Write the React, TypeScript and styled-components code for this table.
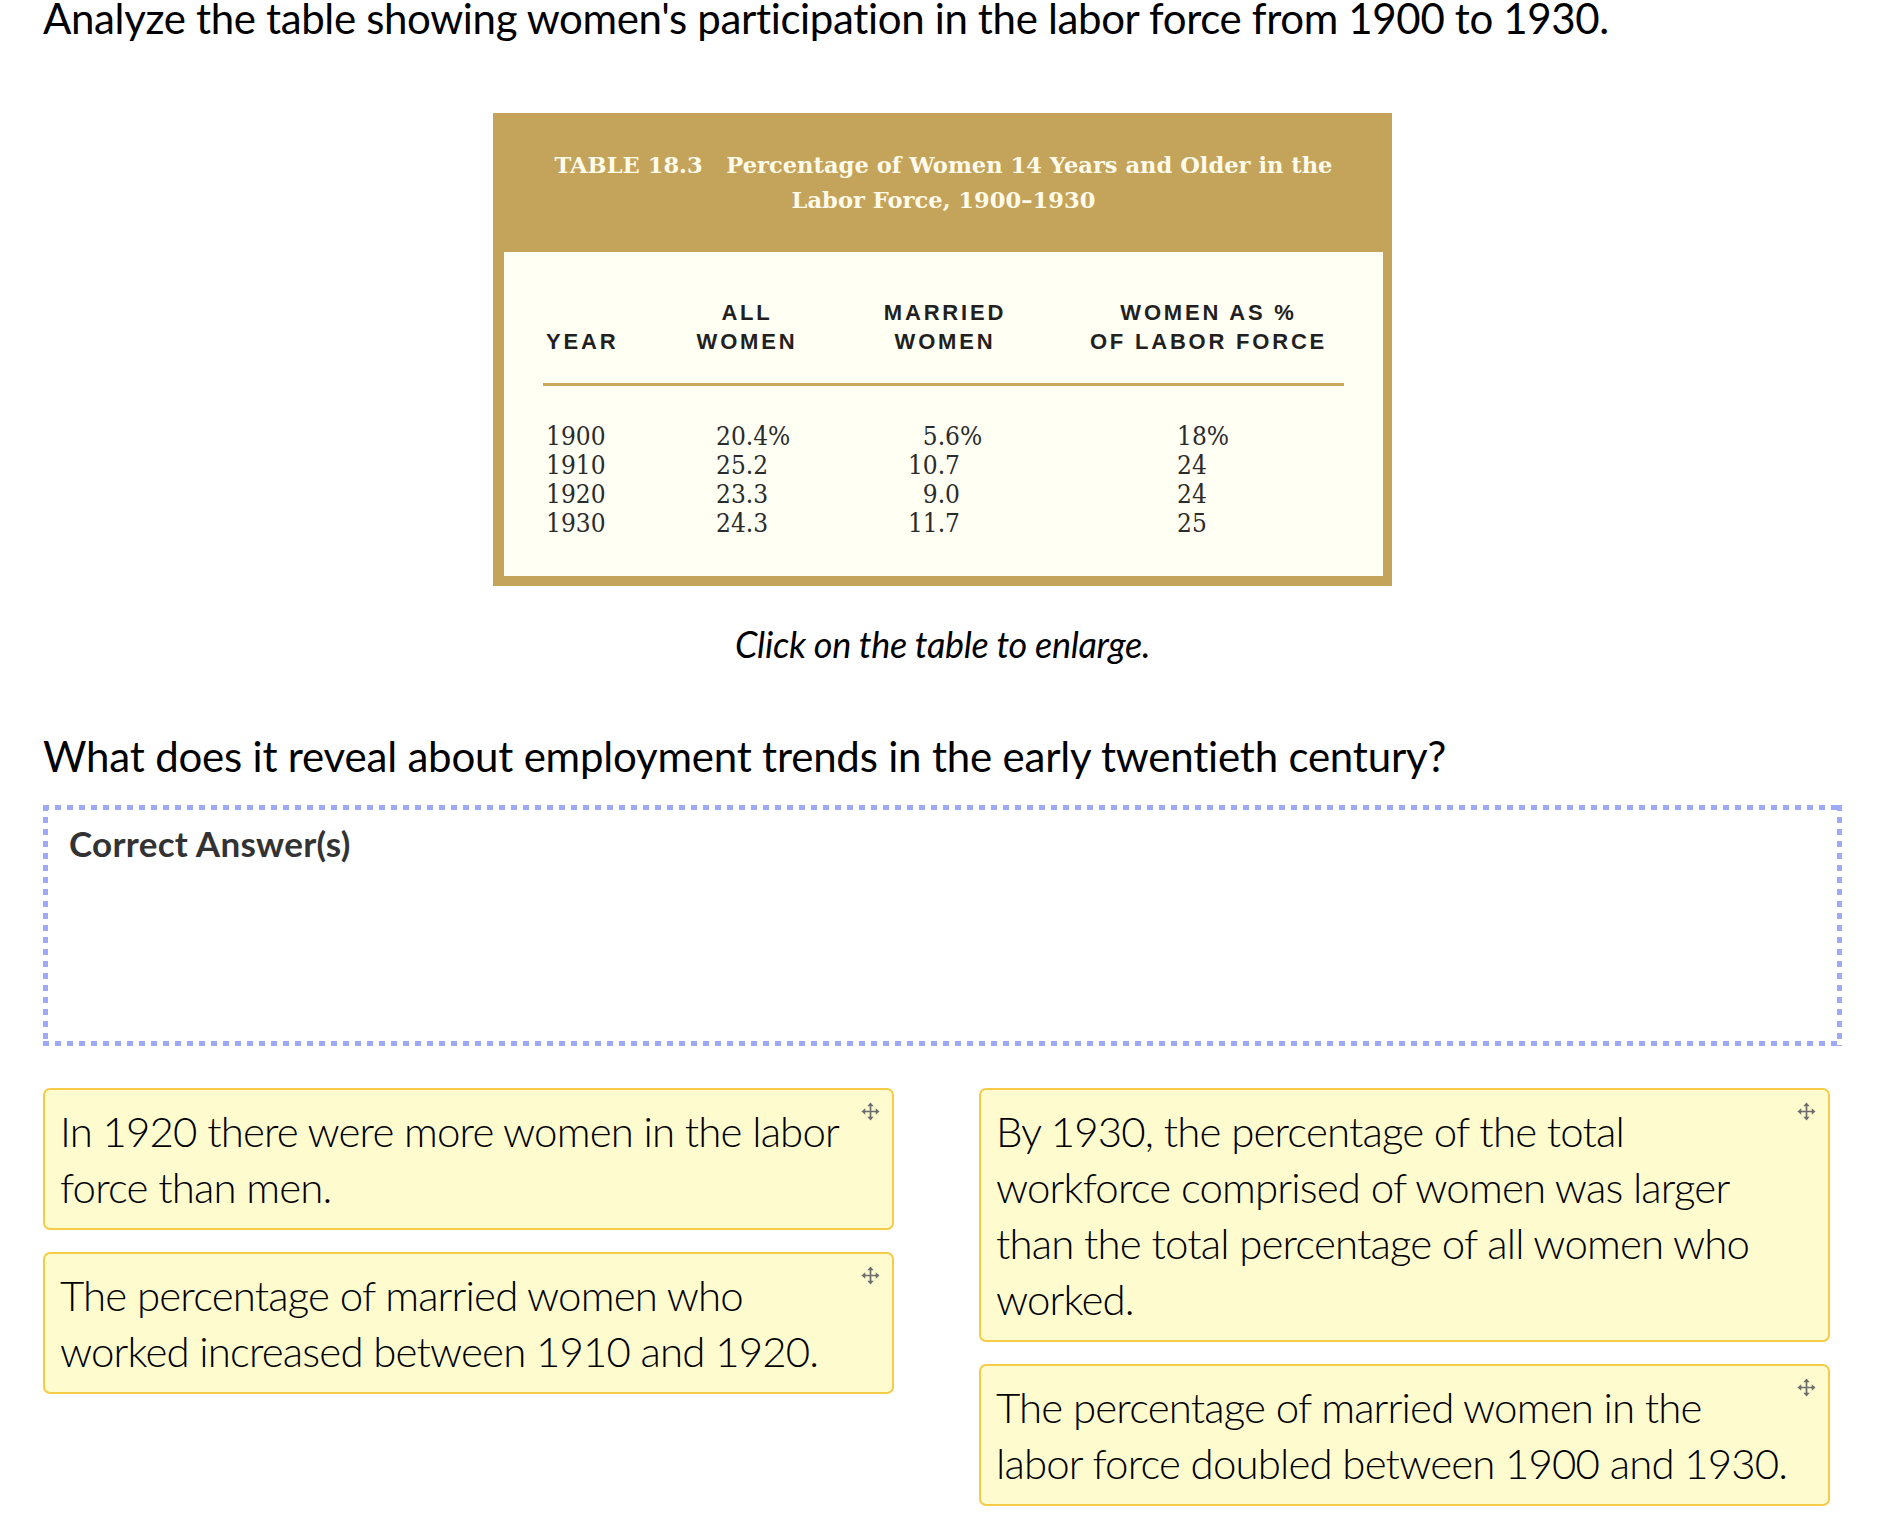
import React from 'react';
import styled, { createGlobalStyle } from 'styled-components';

const GlobalStyle = createGlobalStyle`
  html, body {
    margin: 0;
    padding: 0;
    background: #ffffff;
  }
  body {
    font-family: Lato, "Open Sans", sans-serif;
    color: #000;
  }
`;

const Page = styled.div`
  width: 1888px;
  box-sizing: border-box;
  padding: 0 46px 30px 43px;
`;

const Prompt = styled.p`
  margin: 0;
  font-size: 42px;
  line-height: 36px;
  letter-spacing: -0.35px;
  color: #000;
`;

const Figure = styled.div`
  margin: 77px auto 0;
  width: 899px;
`;

const TableFrame = styled.div`
  background: #c4a35a;
  padding: 0 9px 10px 11px;
`;

const TableTitle = styled.div`
  height: 139px;
  display: flex;
  flex-direction: column;
  align-items: center;
  justify-content: center;
  font-family: "DejaVu Serif", "Liberation Serif", serif;
  font-weight: bold;
  font-size: 22.6px;
  line-height: 35px;
  color: #fffbea;
  text-align: center;
`;

const TableBody = styled.div`
  background: #fffff4;
  padding: 46px 39px 38px;
`;

const HeadRow = styled.div`
  display: grid;
  grid-template-columns: 134px 140px 256px 1fr;
  align-items: end;
  font-family: "Liberation Sans", Arial, sans-serif;
  font-weight: bold;
  font-size: 22px;
  line-height: 29px;
  letter-spacing: 2.8px;
  color: #231f20;
  white-space: nowrap;
`;

const HeadCell = styled.div<{ $left?: boolean }>`
  text-align: ${(p) => (p.$left ? 'left' : 'center')};
  padding-left: ${(p) => (p.$left ? '3px' : '0')};
`;

const Rule = styled.div`
  height: 3px;
  background: #c9a85c;
  margin: 27px 0 36px;
`;

const DataRow = styled.div`
  display: grid;
  grid-template-columns: 170px 160px 301px 1fr;
  font-family: "DejaVu Serif Condensed", "DejaVu Serif", serif;
  font-stretch: condensed;
  font-size: 26px;
  line-height: 29px;
  color: #2b2b2b;
  padding-left: 3px;
`;

const Num = styled.span`
  display: inline-block;
  width: 84px;
  text-align: right;
`;

const Caption = styled.p`
  margin: 40px 0 0;
  text-align: center;
  font-style: italic;
  font-size: 36px;
  line-height: 36px;
  letter-spacing: -0.3px;
`;

const Question = styled(Prompt)`
  margin-top: 76px;
  letter-spacing: -0.2px;
`;

const AnswerZone = styled.div`
  margin-top: 31px;
  height: 241px;
  box-sizing: border-box;
  padding: 20px 26px;
  background-image:
    repeating-linear-gradient(90deg, #9eaaf7 0 6px, transparent 6px 12px),
    repeating-linear-gradient(90deg, #9eaaf7 0 6px, transparent 6px 12px),
    repeating-linear-gradient(180deg, #9eaaf7 0 6px, transparent 6px 12px),
    repeating-linear-gradient(180deg, #9eaaf7 0 6px, transparent 6px 12px);
  background-size: 100% 5px, 100% 5px, 5px 100%, 5px 100%;
  background-position: 0 0, 0 100%, 0 0, 100% 0;
  background-repeat: no-repeat;
`;

const ZoneLabel = styled.div`
  font-weight: bold;
  font-size: 35px;
  line-height: 36px;
  letter-spacing: 0.3px;
  color: #333;
`;

const Choices = styled.div`
  margin-top: 42px;
  width: 1787px;
  display: grid;
  grid-template-columns: 851px 851px;
  column-gap: 85px;
  align-items: start;
`;

const Column = styled.div`
  display: flex;
  flex-direction: column;
  gap: 22px;
`;

const Card = styled.div`
  position: relative;
  background: #fefccf;
  border: 2px solid #f5cb47;
  border-radius: 7px;
  padding: 13px 30px 13px 15px;
  font-weight: 300;
  font-size: 42px;
  line-height: 56px;
  letter-spacing: -0.85px;
  color: #000;
  white-space: nowrap;
`;

const Handle = styled.svg`
  position: absolute;
  top: 12px;
  right: 12px;
  width: 19px;
  height: 19px;
`;

const MoveIcon = () => (
  <Handle viewBox="0 0 20 20">
    <path d="M10 3v14M3 10h14" stroke="#6d6d6d" strokeWidth="1.8" />
    <path
      d="M10 0.5l3.4 4H6.6z M10 19.5l3.4-4H6.6z M0.5 10l4-3.4v6.8z M19.5 10l-4-3.4v6.8z"
      fill="#6d6d6d"
    />
  </Handle>
);

const rows = [
  { year: '1900', all: '20.4%', married: '5.6', pct: true, force: '18%' },
  { year: '1910', all: '25.2', married: '10.7', pct: false, force: '24' },
  { year: '1920', all: '23.3', married: '9.0', pct: false, force: '24' },
  { year: '1930', all: '24.3', married: '11.7', pct: false, force: '25' },
];

const leftChoices = [
  ['In 1920 there were more women in the labor', 'force than men.'],
  ['The percentage of married women who', 'worked increased between 1910 and 1920.'],
];

const rightChoices = [
  [
    'By 1930, the percentage of the total',
    'workforce comprised of women was larger',
    'than the total percentage of all women who',
    'worked.',
  ],
  ['The percentage of married women in the', 'labor force doubled between 1900 and 1930.'],
];

const Choice: React.FC<{ lines: string[] }> = ({ lines }) => (
  <Card>
    <MoveIcon />
    {lines.map((line, i) => (
      <React.Fragment key={i}>
        {line}
        {i < lines.length - 1 && <br />}
      </React.Fragment>
    ))}
  </Card>
);

const App: React.FC = () => (
  <>
    <GlobalStyle />
    <Page>
      <Prompt>Analyze the table showing women's participation in the labor force from 1900 to 1930.</Prompt>

      <Figure>
        <TableFrame>
          <TableTitle>
            <div>TABLE 18.3&nbsp;&nbsp; Percentage of Women 14 Years and Older in the</div>
            <div>Labor Force, 1900–1930</div>
          </TableTitle>
          <TableBody>
            <HeadRow>
              <HeadCell $left>YEAR</HeadCell>
              <HeadCell>
                ALL
                <br />
                WOMEN
              </HeadCell>
              <HeadCell>
                MARRIED
                <br />
                WOMEN
              </HeadCell>
              <HeadCell>
                WOMEN AS %
                <br />
                OF LABOR FORCE
              </HeadCell>
            </HeadRow>
            <Rule />
            {rows.map((r) => (
              <DataRow key={r.year}>
                <span>{r.year}</span>
                <span>{r.all}</span>
                <span>
                  <Num>{r.married}</Num>
                  {r.pct ? '%' : ''}
                </span>
                <span>{r.force}</span>
              </DataRow>
            ))}
          </TableBody>
        </TableFrame>
      </Figure>

      <Caption>Click on the table to enlarge.</Caption>

      <Question>What does it reveal about employment trends in the early twentieth century?</Question>

      <AnswerZone>
        <ZoneLabel>Correct Answer(s)</ZoneLabel>
      </AnswerZone>

      <Choices>
        <Column>
          {leftChoices.map((lines, i) => (
            <Choice key={i} lines={lines} />
          ))}
        </Column>
        <Column>
          {rightChoices.map((lines, i) => (
            <Choice key={i} lines={lines} />
          ))}
        </Column>
      </Choices>
    </Page>
  </>
);

export default App;
